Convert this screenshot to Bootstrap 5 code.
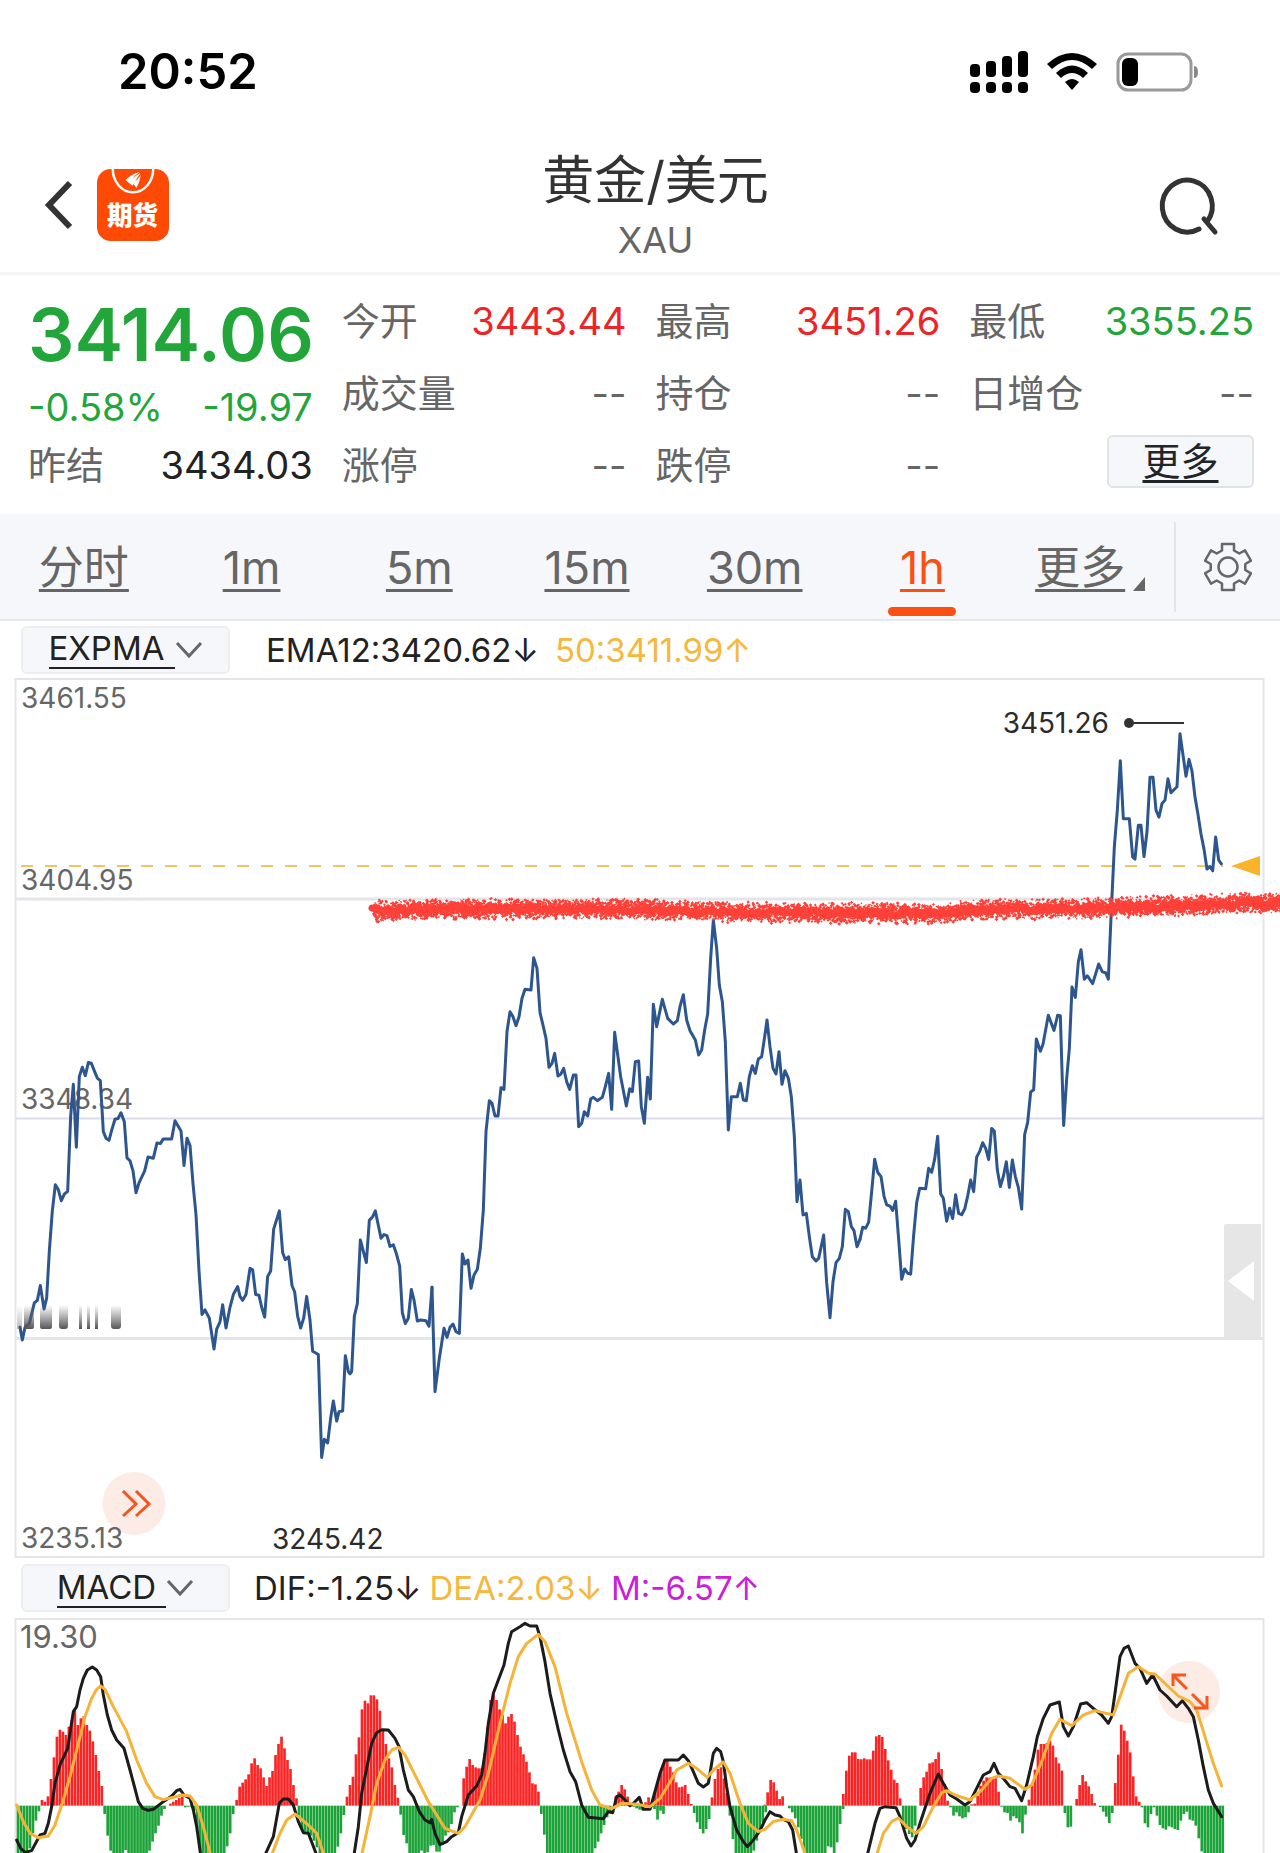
<!DOCTYPE html>
<html lang="zh-CN">
<head>
<meta charset="utf-8">
<meta name="viewport" content="width=device-width, initial-scale=1">
<title>黄金/美元 XAU</title>
<link href="https://cdn.jsdelivr.net/npm/bootstrap@5.3.0/dist/css/bootstrap.min.css" rel="stylesheet">
<style>
  body { font-family: Inter, "Noto Sans CJK SC", sans-serif; color: #222; background: #fff; overflow-x: hidden; }
  a, button { color: inherit; }
  svg { display: block; flex: none; }
  .status { height: 140px; padding: 0 81px 0 118px; }
  .clock { font-size: 49px; line-height: 60px; font-weight: 600; color: #000; }
  .topbar { height: 135px; padding: 0 62px 3px 45px; border-bottom: 3px solid #f5f5f6; }
  .topbar svg { overflow: visible; }
  .side { flex: 1 1 0; }
  .pair { font-size: 52px; line-height: 70px; font-weight: 400; color: #333; }
  .code { font-size: 36px; line-height: 48px; color: #666; }
  .plain { border: 0; background: none; padding: 0; }
  .quote { padding: 10px 26px 13px 28px; gap: 29px; }
  .qcol { flex: 1 1 0; min-width: 0; }
  .qrow { height: 72px; font-size: 38px; line-height: 40px; }
  .qrow span { color: #666; }
  .price { font-size: 73px; line-height: 100px; font-weight: 600; }
  .change { font-size: 38px; line-height: 44px; }
  .quote .up, .up { color: #ee2528; }
  .quote .down, .down { color: #22a63a; }
  .more { width: 147px; height: 53px; font-size: 38px; line-height: 44px; border: 2px solid #dfe2e6; border-radius: 6px; background: #f6f7fa; }
  .periods { height: 107px; background: #f6f7fa; border-bottom: 2px solid #e6e8ec; }
  .period { flex: 1 1 0; font-size: 45px; line-height: 64px; color: #666; padding-top: 22px; }
  .period a, .more span { text-decoration: underline; text-decoration-thickness: 3px; text-underline-offset: 5px; text-decoration-skip-ink: none; }
  .period.on { color: #fa5012; }
  .period.on::after { content: ""; display: block; width: 68px; height: 9px; border-radius: 5px; background: #fa5012; margin: 7px auto 0; }
  .gearbox { width: 106px; }
  .gearbox::before { content: ""; width: 2px; height: 90px; background: #e3e5e9; align-self: center; }
  .study { height: 57px; padding: 0 21px; font-size: 33px; line-height: 40px; white-space: pre; }
  .study.low { height: 60px; }
  .pick { width: 209px; height: 48px; border: 2px solid #eceef1; border-radius: 6px; background: #f6f7fa; margin-right: 36px; }
  .low .pick { margin-right: 24px; }
  .pick span { border-bottom: 2px solid #222; line-height: 37px; padding-right: 10px; }
  .gold { color: #f5b83d; }
  .violet { color: #cb1fd6; }
  .plot svg { width: 100%; height: auto; }
  .plot text { font-family: Inter, sans-serif; font-size: 28px; fill: #666; }
  .plot .peak { font-size: 31px; }
  .plot .extreme { fill: #2b2b2b; }
  .line { fill: none; stroke: #2d568f; stroke-width: 3; stroke-linejoin: round; stroke-linecap: round; vector-effect: non-scaling-stroke; }
  .dif { stroke: #1c1c1c; }
  .dea { stroke: #f6b338; }
  .macd { overflow: hidden; }
</style>
<script src="https://cdn.jsdelivr.net/npm/bootstrap@5.3.0/dist/js/bootstrap.bundle.min.js"></script>
</head>
<body>
<div class="status d-flex align-items-center justify-content-between">
  <div class="clock mt-1">20:52</div>
  <div class="d-flex align-items-center mt-1">
    <svg width="58" height="42" viewBox="0 0 58 42"><g><rect y="13" width="10" height="13" rx="4"/><rect x="16" y="10" width="10" height="16" rx="4"/><rect x="32" y="5" width="10" height="21" rx="4"/><rect x="48" width="10" height="26" rx="4"/><rect y="31" width="10" height="11" rx="4"/><rect x="16" y="31" width="10" height="11" rx="4"/><rect x="32" y="31" width="10" height="11" rx="4"/><rect x="48" y="31" width="10" height="11" rx="4"/></g></svg>
    <svg class="ms-3 me-3" width="56" height="38" viewBox="0 0 56 38"><path d="M3 11Q28-11 53 11L48 16Q28-2 8 16ZM12 20Q28 5 44 20L39 25Q28 15 17 25ZM21 29Q28 23 35 29L28 37Z"/></svg>
    <svg width="83" height="40" viewBox="0 0 83 40"><rect x="2" y="2" width="73" height="36" rx="10" fill="none" stroke="#999" stroke-width="3"/><path d="M78 14Q82 14 82 20T78 26Z" fill="#888"/><rect x="6" y="6" width="16" height="28" rx="6"/></svg>
  </div>
</div>

<header class="topbar d-flex align-items-center">
  <div class="side d-flex align-items-center">
    <button class="plain" aria-label="返回"><svg width="28" height="48" viewBox="0 0 28 48"><path d="M25 2L4 24L25 46" fill="none" stroke="#333" stroke-width="6"/></svg></button>
    <svg class="ms-4" width="72" height="72" viewBox="0 0 73 73" role="img" aria-label="期货"><rect width="73" height="73" rx="14" fill="#ff4a05"/><path d="M16 0A20 23 0 0 0 57 0" fill="none" stroke="#fff" stroke-width="2.5"/><path d="M29 11Q35 5 43 3Q36 8 32 14ZM31 13Q37 8 44 4Q40 10 36 17ZM36 14Q42 11 44 6Q44 12 40 19Z" fill="#fff"/><text x="36" y="57" text-anchor="middle" font-size="26" font-weight="900" fill="#fff" font-family="Noto Sans CJK SC, sans-serif">期货</text></svg>
  </div>
  <div class="text-center ms-5">
    <h1 class="pair m-0">黄金/美元</h1>
    <div class="code">XAU</div>
  </div>
  <div class="side d-flex justify-content-end">
    <button class="plain" aria-label="搜索"><svg width="57" height="58" viewBox="0 0 57 58"><path d="M38 53A25 26 0 1 1 46 46M43 43L54 56" fill="none" stroke="#333" stroke-width="5" stroke-linecap="round"/></svg></button>
  </div>
</header>

<section class="quote d-flex">
  <div class="qcol">
    <div class="price down">3414.06</div>
    <div class="change down d-flex justify-content-between"><b class="fw-normal">-0.58%</b><b class="fw-normal">-19.97</b></div>
    <div class="qrow d-flex align-items-center justify-content-between"><span>昨结</span><b class="fw-normal">3434.03</b></div>
  </div>
  <div class="qcol">
    <div class="qrow d-flex align-items-center justify-content-between"><span>今开</span><b class="fw-normal up">3443.44</b></div>
    <div class="qrow d-flex align-items-center justify-content-between"><span>成交量</span><span>--</span></div>
    <div class="qrow d-flex align-items-center justify-content-between"><span>涨停</span><span>--</span></div>
  </div>
  <div class="qcol">
    <div class="qrow d-flex align-items-center justify-content-between"><span>最高</span><b class="fw-normal up">3451.26</b></div>
    <div class="qrow d-flex align-items-center justify-content-between"><span>持仓</span><span>--</span></div>
    <div class="qrow d-flex align-items-center justify-content-between"><span>跌停</span><span>--</span></div>
  </div>
  <div class="qcol">
    <div class="qrow d-flex align-items-center justify-content-between"><span>最低</span><b class="fw-normal down">3355.25</b></div>
    <div class="qrow d-flex align-items-center justify-content-between"><span>日增仓</span><span>--</span></div>
    <div class="qrow d-flex align-items-center justify-content-end"><button class="more p-0 mb-2"><span class="text-dark">更多</span></button></div>
  </div>
</section>

<nav class="periods d-flex text-center">
  <div class="period"><a href="#">分时</a></div>
  <div class="period"><a href="#">1m</a></div>
  <div class="period"><a href="#">5m</a></div>
  <div class="period"><a href="#">15m</a></div>
  <div class="period"><a href="#">30m</a></div>
  <div class="period on"><a href="#" aria-current="true">1h</a></div>
  <div class="period d-flex justify-content-center"><a href="#">更多</a><svg class="ms-2 mt-auto mb-4 pb-1" width="12" height="18" viewBox="0 0 12 14"><path d="M12 0V14H0Z" fill="#666"/></svg></div>
  <div class="gearbox d-flex"><button class="plain flex-fill d-flex align-items-center justify-content-center" aria-label="设置"><svg width="48" height="50" viewBox="0 0 48 50"><path d="M18 2H30V8.500L35.300 11.500 41 8.300 47 18.700 41.300 22V28L47 31.300 41 41.700 35.300 38.500 30 41.500V48H18V41.500L12.700 38.500 7 41.700 1 31.300 6.700 28V22L1 18.700 7 8.300 12.700 11.500 18 8.500Z" fill="none" stroke="#666" stroke-width="2.500" stroke-linejoin="round"/><circle cx="24" cy="25" r="9.500" fill="none" stroke="#666" stroke-width="2.500"/></svg></button></div>
</nav>

<div class="study d-flex align-items-center">
  <button class="pick d-flex align-items-center justify-content-center p-0"><span>EXPMA</span><svg width="28" height="18" viewBox="0 0 28 18"><path d="M2 2L14 15L26 2" fill="none" stroke="#666" stroke-width="3"/></svg></button>
  <div>EMA12:3420.62↓</div><div class="gold ms-3">50:3411.99↑</div>
</div>

<div class="plot">
<svg viewBox="0 678 1280 880" role="img" aria-label="1小时走势">
  <rect x="15.500" y="679" width="1248" height="878" fill="none" stroke="#e4e5e8" stroke-width="2"/>
  <path d="M16 899H1264M16 1338.500H1264" stroke="#e3e5e9" stroke-width="3"/>
  <path d="M16 1118.500H1264" stroke="#dcdcec" stroke-width="2"/>
  <text x="21" y="708">3461.55</text><text x="21" y="890">3404.95</text><text x="21" y="1109">3348.34</text>
  <path d="M21 866H1223" stroke="#f2c561" stroke-width="2" stroke-dasharray="12 12"/>
  <path d="M1231 866L1260 856V876Z" fill="#fbb32c"/>
  <polyline class="line" transform="translate(0 1000) scale(.33333 .36364)" points="60,900 67,935 75,900 88,890 103,833 112,826 121,785 132,850 140,820 148,690 157,580 166,508 175,522 184,552 193,534 203,526 212,320 220,232 229,405 238,210 247,185 256,208 265,172 274,174 283,195 292,215 301,222 310,362 318,380 327,386 336,355 345,328 354,326 363,310 373,335 381,434 390,442 399,470 408,530 417,503 434,470 444,432 460,435 471,393 481,395 490,382 515,382 525,332 543,360 552,455 561,380 570,400 579,505 588,590 597,745 606,865 615,852 628,875 642,960 650,905 660,885 668,838 678,902 690,845 700,810 713,788 720,815 728,826 738,810 750,738 758,742 767,810 777,812 785,845 794,872 803,760 812,745 821,630 838,580 848,695 856,714 866,706 876,785 884,803 893,870 902,902 911,875 920,815 930,880 938,966 955,975 965,1258 973,1208 983,1218 992,1150 1000,1103 1010,1158 1017,1132 1028,1130 1036,978 1045,1022 1050,1028 1055,1022 1063,870 1072,835 1081,660 1099,722 1108,606 1118,596 1126,580 1143,655 1152,645 1161,648 1170,678 1180,673 1190,700 1199,732 1207,860 1216,890 1225,875 1234,796 1242,825 1252,883 1262,880 1278,882 1287,897 1296,790"/>
  <polyline class="line" transform="translate(430 860) scale(.33333)" points="6,1282 15,1595 28,1495 42,1405 51,1432 60,1402 69,1392 78,1415 88,1420 97,1182 105,1212 114,1200 123,1285 132,1245 142,1228 151,1165 160,1050 168,815 178,722 186,730 195,768 204,768 213,683 222,688 231,515 240,455 249,470 258,497 267,470 276,415 285,388 303,390 311,293 321,325 330,458 340,500 348,535 357,622 366,610 374,580 384,648 392,643 401,625 410,665 419,688 430,645 438,645 446,800 455,790 463,755 473,768 482,717 490,712 502,722 517,712 526,680 536,640 545,748 554,517 572,650 589,738 599,686 607,695 616,605 626,603 634,740 643,790 653,652 661,717 670,433 680,500 697,418 713,475 730,492 742,482 750,440 760,404 770,480 780,512 796,540 806,585 815,570 824,510 833,462 842,295 850,180 860,265 868,375 877,425 886,545 895,810 904,710 922,710 931,670 940,720 949,722 958,650 967,617 976,640 985,597 995,590 1004,530 1011,480 1020,560 1029,625 1038,642 1047,575 1056,673 1065,632 1075,655 1084,710 1093,830 1101,1025 1110,960 1119,1065 1129,1060 1138,1130 1147,1190 1158,1203 1166,1195 1181,1125 1190,1268 1200,1373 1209,1265 1218,1208 1228,1195 1237,1160 1246,1048 1255,1055 1264,1100 1272,1112 1281,1160 1290,1138"/>
  <polyline class="line" transform="translate(860 680) scale(.33333 .43367)" points="0,1290 8,1262 17,1264 26,1250 35,1180 44,1105 53,1135 63,1145 72,1190 80,1210 90,1213 98,1223 107,1202 116,1290 125,1382 134,1358 143,1368 152,1370 161,1280 170,1205 179,1172 197,1173 206,1126 215,1135 224,1105 233,1052 242,1185 250,1195 260,1248 269,1218 278,1242 287,1187 296,1230 305,1233 314,1220 323,1190 332,1153 341,1180 350,1100 359,1087 368,1067 377,1080 386,1106 395,1034 403,1040 412,1130 421,1168 430,1145 439,1111 448,1170 457,1107 466,1145 475,1170 485,1220 494,1048 503,1020 512,950 521,945 529,828 541,856 549,840 565,773 582,808 593,773 601,774 611,1027 620,920 628,850 636,708 646,732 655,650 663,622 673,690 682,682 698,700 716,655 727,673 737,675 745,690 754,530 763,385 772,300 781,186 790,320 808,320 818,408 825,413 835,335 843,335 852,407 861,350 870,224 879,224 888,300 897,316 906,285 915,277 924,228 933,260 951,246 960,124 978,222 987,183 996,210 1005,270 1014,310 1023,355 1032,390 1041,436 1050,430 1058,440 1067,362 1076,415 1084,424"/>
  <g id="brush" fill="#fd4038"></g>
  <circle cx="1129" cy="723" r="5" fill="#333"/><path d="M1129 723H1184" stroke="#333" stroke-width="2"/>
  <text class="extreme" x="1109" y="733" text-anchor="end">3451.26</text>
  <linearGradient id="fade" x2="0" y2="1"><stop stop-color="#666" stop-opacity="0"/><stop offset="1" stop-color="#555"/></linearGradient>
  <g fill="url(#fade)"><rect x="17" y="1305" width="5" height="24" opacity=".4"/><rect x="24" y="1305" width="10" height="24" rx="2"/><rect x="40" y="1305" width="12" height="24" rx="2"/><rect x="59" y="1305" width="9" height="24" rx="3"/><rect x="79" y="1305" width="3" height="24"/><rect x="87" y="1305" width="3" height="24"/><rect x="95" y="1305" width="3" height="24"/><rect x="111" y="1305" width="10" height="24" rx="3"/></g>
  <path d="M1224 1337V1226Q1224 1224 1226 1224H1261V1337Z" fill="#e6e6e6"/><path d="M1228 1281L1254 1261V1301Z" fill="#fff"/>
  <circle cx="134" cy="1503.500" r="31.500" fill="#fdebe6"/><path d="M123 1491L136 1504L123 1516M136 1491L149 1504L136 1516" fill="none" stroke="#f4551d" stroke-width="3"/>
  <text x="21" y="1548">3235.13</text><text class="extreme" x="272" y="1549">3245.42</text>
</svg>
</div>

<div class="study low d-flex align-items-center">
  <button class="pick d-flex align-items-center justify-content-center p-0"><span>MACD</span><svg width="28" height="18" viewBox="0 0 28 18"><path d="M2 2L14 15L26 2" fill="none" stroke="#666" stroke-width="3"/></svg></button>
  <div>DIF:-1.25↓</div><div class="gold ms-2">DEA:2.03↓</div><div class="violet ms-2">M:-6.57↑</div>
</div>

<div class="plot macd">
<svg viewBox="0 1618 1280 235" role="img" aria-label="MACD">
  <path d="M15.500 1853V1619H1263.500V1853" fill="none" stroke="#e4e5e8" stroke-width="2"/>
  <text class="peak" x="20" y="1648">19.30</text>
  <circle cx="1189" cy="1692" r="31" fill="#fdebe6"/>
  <g transform="translate(0 1540) scale(.33333)">
    <g id="bars"></g>
    <path class="line dif" d="M50 900L62 925 75 937 95 932 120 885 135 880 145 850 155 800 165 730 180 675 203 625 220 515 230 500 240 450 250 415 262 390 277 381 290 390 302 410 310 465 322 525 335 570 350 600 372 625 390 690 402 735 415 785 428 805 445 811 460 808 490 785 515 768 530 752 540 748 552 765 570 775 580 810 590 860 602 945M795 945L820 890 838 790 850 777 865 777 880 795 895 845 910 878 925 880 950 945M1062 945L1075 860 1085 760 1095 710 1115 610 1130 578 1145 569 1165 570 1185 595 1197 620 1210 690 1225 750 1240 770 1258 815 1275 840 1290 848"/>
    <path class="line dif" transform="translate(1290)" d="M0 848L5 838 15 880 30 914 50 905 65 890 85 878 95 830 115 765 140 738 155 705 165 640 175 550 190 460 205 420 222 375 235 310 245 275 270 260 285 250 300 258 320 258 330 290 345 365 360 460 385 570 400 630 420 695 437 725 455 795 475 832 520 836 535 815 548 818 560 770 570 765 585 780 600 797 610 790 628 772 640 808 660 808 668 780 690 700 705 660 745 660 760 645 775 662 790 695 805 730 820 741 835 730 850 640 860 625 872 635 880 665 890 740 900 800 920 870 940 905 952 920 970 900 990 872 1005 840 1020 815 1035 825 1050 828 1060 838 1075 845 1088 870 1100 945"/>
    <path class="line dif" transform="translate(2580)" d="M22 945L45 850 60 805 75 800 108 803 120 830 140 895 153 918 165 900 180 850 210 760 235 702 250 730 270 765 290 777 315 795 330 785 350 745 370 705 390 695 402 670 415 700 430 715 450 740 465 745 485 782 500 735 520 650 532 590 550 535 570 495 598 486 610 560 625 588 640 560 662 492 680 488 700 505 725 525 745 550 755 530 765 460 780 350 792 325 805 318 825 370 840 385 860 430 878 405 900 450 920 468 950 500 967 482 985 505 1000 530 1015 600 1030 680 1045 750 1060 790 1085 830"/>
    <path class="line dea" d="M50 795L70 845 90 880 115 893 145 888 165 855 190 780 210 710 235 610 255 530 275 475 290 448 302 438 315 448 340 500 380 575 410 660 440 730 465 770 490 779 520 772 545 765 570 768 590 795 610 860 632 945M815 945L840 880 860 840 885 822 905 838 930 860 950 880 972 945M1085 945L1110 830 1130 730 1155 660 1175 630 1195 622 1215 645 1250 715 1275 765 1290 795"/>
    <path class="line dea" transform="translate(1290)" d="M0 792L20 825 45 865 85 880 105 860 130 815 150 780 175 700 210 550 240 430 265 350 290 310 325 283 345 305 375 380 410 520 455 665 485 750 510 795 545 806 575 790 620 793 660 800 690 775 715 735 740 690 775 670 800 685 832 712 850 690 880 666 900 700 930 790 955 850 985 875 1005 868 1030 845 1060 838 1085 842 1100 870 1127 945"/>
    <path class="line dea" transform="translate(2580)" d="M50 945L70 880 95 845 115 834 140 860 168 880 190 860 220 800 245 758 260 752 285 765 330 780 365 750 395 715 415 708 450 715 495 748 515 735 545 665 575 580 600 538 635 557 670 525 705 512 730 518 760 525 780 470 805 400 835 380 865 400 885 402 920 435 955 468 990 485 1010 510 1035 590 1060 670 1085 738"/>
  </g>
  <path d="M1187 1689L1173 1675M1173 1686V1675H1186M1192 1694L1206 1708M1207 1696V1708H1194" fill="none" stroke="#f9561c" stroke-width="3"/>
</svg>
</div>

<script>
  const NS = "http://www.w3.org/2000/svg";
  // MACD histogram: [start x, bar heights]; positive bars are red, negative green
  const f = (n, v) => Array(n).fill(v);
  const runs = [
    [50, [-160,-160,-160,-160,-128,-83,-45,-17]],
    [122, [17,12,28,80,145,207,228,222,212,237,257,285,242,262,268,242,225,193,152,104,59]],
    [310, [-25,-90,-135,-150,-150,-150,-142,-133,-142,...f(6,-150),-135,-108,-83,-60,-30,-10]],
    [507, [6,12,17,23,28]],
    [552, [-5,-3,-3,-15,-80,-140,...f(8,-150),-122,-83,-25]],
    [706, [17,57,69,79,94,127,142,122,112,85,59,85,104,152,185,207,172,137,110,62,22]],
    [893, [-30,-70,-78,-82,-90,-105,-125,...f(6,-150),-123,-83,-28]],
    [1037, [27,62,87,154,205,289,315,307,331,331,319,285,227,185,142,115,62,24]],
    [1198, [-27,-88,-113,-145,-145,-145,-145,-135,-145,-140,-120,-118,-138,-138,-118,-90,-80,-55,-20,-5]],
    [1387, [82,117,140,122,115,112,112,157,237,317,337,317,289,272,247,267,275,252,212,177,154,132,100,67,64,42]],
    [1620, [-25,-87,...f(16,-150),-128,-108,-83,-58,-35,-20]],
    [1843, [27,42,62,49,27,5,-3,-8,-12,-14,10,25,-5,-10,-42,-15,-25]],
    [1962, [50,80,110,138,140,117,100,70,55,57,62,35,5,-22,-50,-70,-83,-70,-40]],
    [2132, [25,80,110,115,82,38,-30,-100,...f(6,-150),-135,-105,-75,-50,-20]],
    [2290, [3,40,77,70,45,20,28]],
    [2364, [-8,-20,-38,-65,-100,...f(8,-150),-122,-125,-145,-110,-55,-10]],
    [2526, [35,105,150,160,160,140]],
    [2580, [139,142,139,139,165,208,212,206,170,136,108,78,68,22,-50,-70,-85,-95,-60]],
    [2758, [53,85,102,127,130,140,160,110,65,15,-5,-30,-20,-32,-38,-35,-20]],
    [2911, [4,6,30,60,75,85,84,80,85,42,-3,-20,-22,-45,-32,-38,-50,-83,-27]],
    [3083, [18,60,108,168,185,185,188,195,180,145,127,105,-22,-65,-63]],
    [3226, [20,62,92,73,58,35,8]],
    [3297, [-4,-18,-33,-52,-22,68,153,243,225,195,160,88,28,12]],
    [3422, [-5,-53,-65,-25,-5,-30,-58,-68,-72,-62,-65,-70,-73,-45,-25,-18,-42,-45,-60,-98,-137,...f(7,-150)]]
  ];
  const bars = document.getElementById("bars");
  for (const [x0, hs] of runs) hs.forEach((h, i) => {
    const r = document.createElementNS(NS, "rect");
    r.setAttribute("x", x0 + i * 8.97);
    r.setAttribute("y", h > 0 ? 797 - h : 797);
    r.setAttribute("width", 8);
    r.setAttribute("height", Math.abs(h));
    r.setAttribute("fill", h > 0 ? "#fb2424" : "#1ba337");
    bars.append(r);
  });

  // Hand-drawn resistance stroke: a ragged core with scattered specks around it
  const spine = [[372,911],[430,909],[632,909],[700,911],[780,913],[860,913],[930,914],[980,910],[1110,908],[1200,905],[1240,903],[1290,904]];
  let seed = 7;
  const rnd = () => (seed = (seed * 16807) % 2147483647) / 2147483647;
  let core = "M", specks = "";
  for (let i = 1; i < spine.length; i++) {
    const [ax, ay] = spine[i - 1], [bx, by] = spine[i];
    for (let x = ax; x < bx; x += 1) {
      const y = ay + (by - ay) * (x - ax) / (bx - ax);
      if (x % 4 === 0) core += `${x} ${(y + rnd() * 6 - 3).toFixed(1)} `;
      for (let k = 0; k < 8; k++) {
        const d = (rnd() + rnd() - 1) * 11, s = (0.8 + rnd() * 1.2).toFixed(1);
        specks += `M${(x + rnd() * 2 - s).toFixed(1)} ${(y + d).toFixed(1)}l${s} ${s}l${s}-${s}l-${s}-${s}z`;
      }
    }
  }
  document.getElementById("brush").innerHTML =
    `<path d="${core}" fill="none" stroke="#fd4038" stroke-width="7" stroke-linejoin="round" stroke-linecap="round"/><path d="${specks}"/>`;
</script>
</body>
</html>
